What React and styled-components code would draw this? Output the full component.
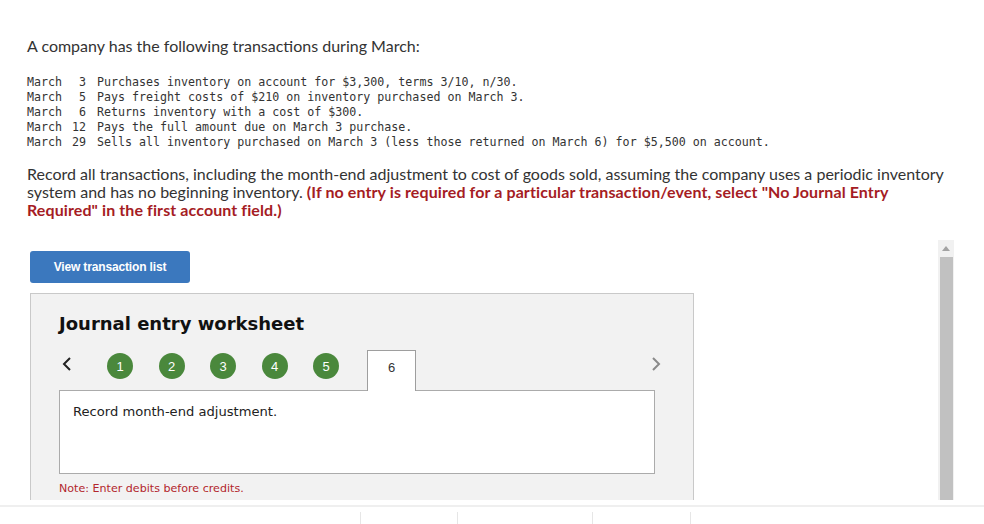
import { Fragment } from "react";
import styled, { createGlobalStyle } from "styled-components";

const GlobalStyle = createGlobalStyle`
  html, body {
    margin: 0;
    padding: 0;
    background: #fff;
  }
  body {
    width: 984px;
    height: 524px;
    overflow: hidden;
  }
`;

const Page = styled.div`
  display: flex;
  flex-direction: column;
  width: 984px;
  height: 524px;
  overflow: hidden;
`;

const Question = styled.div`
  padding: 37px 30px 0 27px;
  font-family: Lato, "Open Sans", sans-serif;
  color: #333;
`;

const Lead = styled.p`
  margin: 0;
  font-size: 16px;
  line-height: 18px;
`;

const TransList = styled.div`
  display: grid;
  grid-template-columns: 35px 24px 1fr;
  margin-top: 20px;
  font-family: "DejaVu Sans Mono", "Liberation Mono", monospace;
  font-size: 11.65px;
  line-height: 15px;
  color: #333;
`;

const Month = styled.span``;

const Day = styled.span`
  text-align: right;
`;

const Desc = styled.span`
  padding-left: 11px;
  white-space: pre;
`;

const Instructions = styled.p`
  margin: 15px 0 0;
  font-size: 16px;
  line-height: 18px;
`;

const Warn = styled.strong`
  color: #a51c24;
  font-weight: 700;
  letter-spacing: 0.1px;
`;

const ScrollRegion = styled.div`
  display: flex;
  margin-top: 21px;
  height: 264px;
  overflow: hidden;
`;

const ScrollContent = styled.div`
  flex: 1;
  padding-left: 30px;
`;

const PrimaryButton = styled.button`
  display: block;
  margin-top: 11px;
  width: 160px;
  height: 32px;
  border: none;
  border-radius: 3px;
  background: #3b78be;
  color: #fff;
  font-family: "Liberation Sans", Arial, sans-serif;
  font-weight: 700;
  font-size: 12px;
  letter-spacing: -0.15px;
`;

const Worksheet = styled.section`
  margin-top: 10px;
  width: 596px;
  padding: 20px 38px 40px 28px;
  background: #f2f2f2;
  border: 1px solid #c9c9c9;
`;

const Title = styled.h2`
  margin: 0;
  font-family: "DejaVu Sans", Verdana, sans-serif;
  font-weight: 700;
  font-size: 18px;
  line-height: 20px;
  color: #111;
`;

const StepRow = styled.div`
  display: flex;
  align-items: flex-start;
  height: 41px;
  margin-top: 16px;
  margin-right: -14px;
  margin-bottom: -1px;
  position: relative;
  z-index: 1;
`;

const Arrow = styled.span`
  display: flex;
  justify-content: center;
  align-items: center;
  width: ${(p) => p.$w}px;
  height: 16px;
  margin-top: 6px;
`;

const Step = styled.span`
  display: flex;
  justify-content: center;
  align-items: center;
  width: 26px;
  height: 26px;
  margin-top: 3px;
  margin-left: ${(p) => p.$gap}px;
  border-radius: 50%;
  background: #4a883c;
  color: #fff;
  font-family: "Liberation Sans", Arial, sans-serif;
  font-size: 13px;
`;

const ActiveTab = styled.span`
  align-self: stretch;
  width: 49px;
  margin-left: 28px;
  padding-top: 9px;
  box-sizing: border-box;
  background: #fff;
  border: 1px solid #9e9e9e;
  border-bottom: none;
  text-align: center;
  font-family: "Liberation Sans", Arial, sans-serif;
  font-size: 13px;
  line-height: 16px;
  color: #333;
`;

const Spacer = styled.span`
  flex: 1;
`;

const EntryBox = styled.div`
  height: 84px;
  box-sizing: border-box;
  padding: 12px 13px;
  background: #fff;
  border: 1px solid #ababab;
  font-family: "DejaVu Sans", Verdana, sans-serif;
  font-size: 13.1px;
  line-height: 18px;
  color: #222;
`;

const Note = styled.p`
  margin: 8px 0 0;
  font-family: "DejaVu Sans", sans-serif;
  font-size: 11.1px;
  line-height: 14px;
  color: #b3262d;
`;

const Scrollbar = styled.div`
  display: flex;
  flex-direction: column;
  width: 16px;
  margin-right: 30px;
  background: #f1f1f1;
`;

const ScrollUp = styled.div`
  display: flex;
  justify-content: center;
  align-items: center;
  height: 17px;
`;

const Thumb = styled.div`
  flex: 1;
  margin: 0 1px 0 2px;
  background: #c1c1c1;
`;

const FooterRule = styled.div`
  margin-top: 5px;
  border-top: 2px solid #efefef;
`;

const FooterCells = styled.div`
  display: flex;
  margin-top: 5px;
  height: 12px;
`;

const Cell = styled.div`
  width: ${(p) => p.$w}px;
  border-left: ${(p) => (p.$first ? "none" : "1px solid #e6e6e6")};
`;

const Chevron = ({ dir, stroke }) => (
  <svg width="10" height="16" viewBox="0 0 10 16">
    <path
      d={dir === "left" ? "M8 2 L2 8 L8 14" : "M2 2 L8 8 L2 14"}
      fill="none"
      stroke={stroke}
      strokeWidth="2"
    />
  </svg>
);

const transactions = [
  ["3", "Purchases inventory on account for $3,300, terms 3/10, n/30."],
  ["5", "Pays freight costs of $210 on inventory purchased on March 3."],
  ["6", "Returns inventory with a cost of $300."],
  ["12", "Pays the full amount due on March 3 purchase."],
  ["29", "Sells all inventory purchased on March 3 (less those returned on March 6) for $5,500 on account."],
];

export default function App() {
  const steps = [1, 2, 3, 4, 5];
  return (
    <Page>
      <GlobalStyle />
      <Question>
        <Lead>A company has the following transactions during March:</Lead>
        <TransList>
          {transactions.map(([day, text]) => (
            <Fragment key={day}>
              <Month>March</Month>
              <Day>{day}</Day>
              <Desc>{text}</Desc>
            </Fragment>
          ))}
        </TransList>
        <Instructions>
          Record all transactions, including the month-end adjustment to cost of goods sold, assuming the company uses a periodic inventory
          <br />
          system and has no beginning inventory.{" "}
          <Warn>
            (If no entry is required for a particular transaction/event, select "No Journal Entry
            <br />
            Required" in the first account field.)
          </Warn>
        </Instructions>
      </Question>

      <ScrollRegion>
        <ScrollContent>
          <PrimaryButton>View transaction list</PrimaryButton>
          <Worksheet>
            <Title>Journal entry worksheet</Title>
            <StepRow>
              <Arrow $w={16}>
                <Chevron dir="left" stroke="#222" />
              </Arrow>
              {steps.map((n, i) => (
                <Step key={n} $gap={i === 0 ? 32 : 25.5}>
                  {n}
                </Step>
              ))}
              <ActiveTab>6</ActiveTab>
              <Spacer />
              <Arrow $w={26}>
                <Chevron dir="right" stroke="#8a8a8a" />
              </Arrow>
            </StepRow>
            <EntryBox>Record month-end adjustment.</EntryBox>
            <Note>Note: Enter debits before credits.</Note>
          </Worksheet>
        </ScrollContent>
        <Scrollbar>
          <ScrollUp>
            <svg width="8" height="5" viewBox="0 0 8 5">
              <path d="M0 5 L4 0 L8 5 Z" fill="#a3a3a3" />
            </svg>
          </ScrollUp>
          <Thumb />
        </Scrollbar>
      </ScrollRegion>

      <FooterRule />
      <FooterCells>
        <Cell $w={361} $first />
        <Cell $w={97} />
        <Cell $w={134} />
        <Cell $w={98} />
        <Cell $w={294} />
      </FooterCells>
    </Page>
  );
}
